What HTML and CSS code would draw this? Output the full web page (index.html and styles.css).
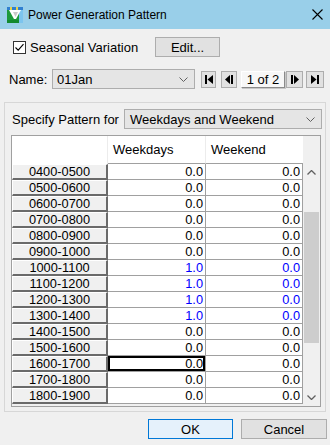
FILE: index.html
```html
<!DOCTYPE html>
<html>
<head>
<meta charset="utf-8">
<link rel="stylesheet" href="styles.css">
</head>
<body>
<div class="titlebar">
  <svg class="app-icon" viewBox="0 0 16 16">
    <rect x="0" y="0" width="16" height="16" fill="#1d9a3a"/>
    <rect x="0" y="0" width="16" height="3" fill="#2f7fd0"/>
    <rect x="3" y="0" width="2" height="3" fill="#e8d24a"/>
    <rect x="9" y="0" width="2" height="3" fill="#e8d24a"/>
    <rect x="12" y="3" width="4" height="13" fill="#7cc4ee"/>
    <polygon points="2,3 14,3 9,12 7,12" fill="#ffffff"/>
    <polygon points="6,5 11,5 8.5,10" fill="#c9c9c9"/>
    <rect x="0" y="13" width="12" height="3" fill="#138a2e"/>
  </svg>
  <span class="title">Power Generation Pattern</span>
  <svg class="close" viewBox="0 0 11 11"><path d="M0.5 0.5 L10.5 10.5 M10.5 0.5 L0.5 10.5" stroke="#000" stroke-width="1.1" fill="none"/></svg>
</div>

<div class="content">
  <div class="row row-season">
    <label class="check">
      <span class="box"><svg viewBox="0 0 11 11"><path d="M1.5 5.5 L4.2 8.2 L9.5 2.2" stroke="#000" stroke-width="1.1" fill="none"/></svg></span>
      <span>Seasonal Variation</span>
    </label>
    <button class="btn edit">Edit...</button>
  </div>

  <div class="row row-name">
    <span class="name-lbl">Name:</span>
    <div class="combo name-combo"><span>01Jan</span><svg class="chev" viewBox="0 0 9 5"><path d="M0.5 0.5 L4.5 4.5 L8.5 0.5" stroke="#606060" fill="none"/></svg></div>
    <div class="nav">
      <span class="navbtn nb1"><svg viewBox="0 0 8 9"><rect x="0" y="0" width="2" height="9"/><polygon points="8,0 8,9 2.5,4.5"/></svg></span>
      <span class="navbtn nb2"><svg viewBox="0 0 8 9"><polygon points="5,0 5,9 0,4.5"/><rect x="6" y="0" width="2" height="9"/></svg></span>
      <span class="navfield">1 of 2</span>
      <span class="navbtn nb3"><svg viewBox="0 0 8 9"><rect x="0" y="0" width="2" height="9"/><polygon points="3,0 3,9 8,4.5"/></svg></span>
      <span class="navbtn nb4"><svg viewBox="0 0 8 9"><polygon points="0,0 0,9 5.5,4.5"/><rect x="6" y="0" width="2" height="9"/></svg></span>
    </div>
  </div>

  <div class="group">
    <div class="row row-pattern">
      <span class="pat-lbl">Specify Pattern for</span>
      <div class="combo pat-combo"><span>Weekdays and Weekend</span><svg class="chev" viewBox="0 0 9 5"><path d="M0.5 0.5 L4.5 4.5 L8.5 0.5" stroke="#606060" fill="none"/></svg></div>
    </div>
    <div class="grid">
      <div class="cells">
        <div class="hd corner"></div>
        <div class="hd">Weekdays</div>
        <div class="hd last">Weekend</div>

        <div class="rh">0400-0500</div><div class="c">0.0</div><div class="c">0.0</div>
        <div class="rh">0500-0600</div><div class="c">0.0</div><div class="c">0.0</div>
        <div class="rh">0600-0700</div><div class="c">0.0</div><div class="c">0.0</div>
        <div class="rh">0700-0800</div><div class="c">0.0</div><div class="c">0.0</div>
        <div class="rh">0800-0900</div><div class="c">0.0</div><div class="c">0.0</div>
        <div class="rh">0900-1000</div><div class="c">0.0</div><div class="c">0.0</div>
        <div class="rh">1000-1100</div><div class="c blue">1.0</div><div class="c blue">0.0</div>
        <div class="rh">1100-1200</div><div class="c blue">1.0</div><div class="c blue">0.0</div>
        <div class="rh">1200-1300</div><div class="c blue">1.0</div><div class="c blue">0.0</div>
        <div class="rh">1300-1400</div><div class="c blue">1.0</div><div class="c blue">0.0</div>
        <div class="rh">1400-1500</div><div class="c">0.0</div><div class="c">0.0</div>
        <div class="rh">1500-1600</div><div class="c">0.0</div><div class="c">0.0</div>
        <div class="rh">1600-1700</div><div class="c sel">0.0</div><div class="c">0.0</div>
        <div class="rh">1700-1800</div><div class="c">0.0</div><div class="c">0.0</div>
        <div class="rh">1800-1900</div><div class="c">0.0</div><div class="c">0.0</div>
      </div>
      <div class="side">
        <div class="side-head"></div>
        <div class="vscroll">
          <div class="arrow"><svg viewBox="0 0 9 5"><path d="M0.5 4.5 L4.5 0.5 L8.5 4.5" stroke="#606060" stroke-width="1.3" fill="none"/></svg></div>
          <div class="track"><div class="thumb"></div></div>
          <div class="arrow"><svg viewBox="0 0 9 5"><path d="M0.5 0.5 L4.5 4.5 L8.5 0.5" stroke="#606060" stroke-width="1.3" fill="none"/></svg></div>
        </div>
      </div>
    </div>
  </div>

  <div class="row row-buttons">
    <button class="btn ok">OK</button>
    <button class="btn cancel">Cancel</button>
  </div>
</div>
</body>
</html>
```

FILE: styles.css
```css
* { box-sizing: border-box; }
html, body { margin: 0; padding: 0; }
body {
  width: 330px;
  height: 445px;
  overflow: hidden;
  background: #f0f0f0;
  font-family: "Liberation Sans", Arial, sans-serif;
  font-size: 13px;
  color: #000;
}

.titlebar {
  height: 29px;
  background: #99cfe9;
  display: flex;
  align-items: center;
  padding-left: 7px;
}
.app-icon { width: 16px; height: 16px; margin-right: 5px; flex: none; }
.title {
  flex: 1;
  font-family: "Liberation Sans", Arial, sans-serif;
  font-size: 12px;
  color: #000;
}
.close { width: 11px; height: 11px; margin-right: 7px; }

.content { display: flex; flex-direction: column; }
.row { display: flex; align-items: center; }

.row-season { margin-top: 8px; padding-left: 13px; height: 20px; }
.check { display: flex; align-items: center; width: 142px; }
.box {
  width: 13px; height: 13px;
  border: 1px solid #333;
  background: #fff;
  display: flex; align-items: center; justify-content: center;
  margin-right: 4px;
}
.box svg { width: 11px; height: 11px; }

.btn {
  font-family: "Liberation Sans", Arial, sans-serif;
  font-size: 13px;
  color: #000;
  background: #e1e1e1;
  border: 1px solid #adadad;
  padding: 0;
  height: 20px;
  margin: 0;
}
.edit { width: 65px; }

.row-name { margin-top: 12px; height: 20px; padding-left: 9px; }
.name-lbl { width: 43px; }
.combo {
  height: 20px;
  background: #e5e5e5;
  border: 1px solid #adadad;
  display: flex; align-items: center;
  padding-left: 4px; padding-right: 6px;
}
.combo span { flex: 1; }
.chev { width: 9px; height: 5px; }
.name-combo { width: 143px; }

.nav { display: flex; align-items: center; margin-left: 6px; height: 17px; }
.navbtn {
  height: 17px;
  background: #e1e1e1;
  border: 1px solid #adadad;
  display: flex; align-items: center; justify-content: center;
}
.navbtn svg { width: 8px; height: 9px; fill: #000; }
.nb1 { width: 15px; }
.nb2 { width: 16px; margin-left: 5px; }
.nb3 { width: 17px; margin-left: 1px; }
.nb4 { width: 18px; margin-left: 3px; }
.navfield {
  width: 44px; height: 17px;
  margin-left: 4px;
  background: #f7f7f7;
  border-top: 1px solid #fff;
  border-left: 1px solid #fff;
  border-right: 1px solid #8a8a8a;
  border-bottom: 1px solid #8a8a8a;
  box-shadow: 1px 1px 0 #c8c8c8;
  display: flex; align-items: center; justify-content: center;
  font-size: 13px;
}

.group {
  margin-top: 13px;
  margin-left: 4px;
  width: 322px;
  height: 310px;
  border: 1px solid #d7d7d7;
  padding: 6px 0 0 6px;
}
.row-pattern { height: 20px; padding-left: 1px; }
.pat-lbl { width: 112px; }
.pat-combo { width: 198px; font-size: 13px; padding-left: 5px; }

.grid {
  margin-top: 6px;
  width: 310px;
  height: 272px;
  border: 1px solid #a0a0a0;
  display: flex;
  background: #f0f0f0;
}
.cells {
  display: grid;
  grid-template-columns: 96px 98px 97px;
  grid-template-rows: 28px;
  grid-auto-rows: 16px;
  align-content: start;
}
.hd {
  background: #fff;
  border-right: 1px solid #ececec;
  border-bottom: 1px solid #a0a0a0;
  padding-left: 5px;
  display: flex; align-items: center;
  font-size: 13px;
}
.hd.corner { border-bottom: none; }
.hd.last { border-right: none; }
.rh {
  background: #f0f0f0;
  border-top: 1px solid #fff;
  border-left: 1px solid #fff;
  border-right: 2px solid #6a6a6a;
  border-bottom: 2px solid #6a6a6a;
  text-align: center;
  line-height: 13px;
  font-size: 12.8px;
  color: #000;
}
.c {
  background: #fff;
  border-right: 1px solid #a0a0a0;
  border-bottom: 1px solid #a0a0a0;
  text-align: right;
  padding-right: 2px;
  line-height: 15px;
  font-size: 12.8px;
}
.c.blue { color: #0000ff; }
.c.sel { box-shadow: inset 0 0 0 2px #000; }

.side { width: 17px; display: flex; flex-direction: column; }
.side-head { height: 28px; }
.vscroll { flex: 1; display: flex; flex-direction: column; }
.arrow { height: 17px; display: flex; align-items: center; justify-content: center; }
.arrow svg { width: 9px; height: 5px; }
.track { flex: 1; padding-top: 31px; padding-left: 1px; padding-right: 1px; }
.thumb { height: 131px; background: #cdcdcd; }

.row-buttons { margin-top: 7px; padding-left: 148px; height: 20px; }
.ok { width: 85px; background: #e5f1fb; border-color: #0078d7; }
.cancel { width: 86px; margin-left: 8px; }
```
